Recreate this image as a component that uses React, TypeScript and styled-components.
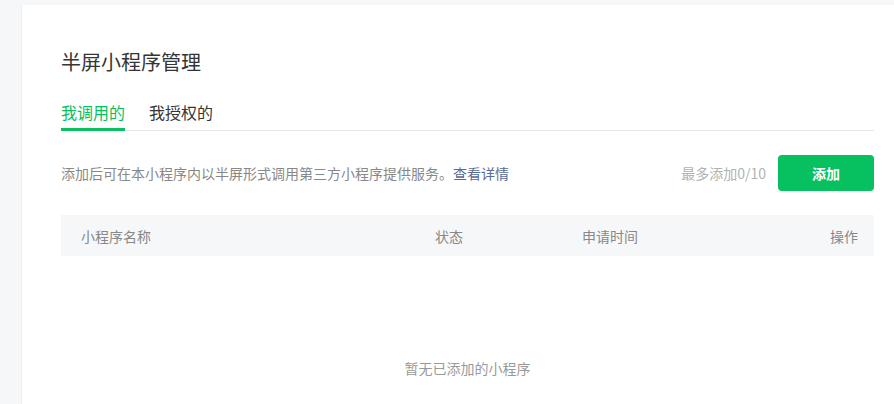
import React, { useState } from 'react';
import styled, { createGlobalStyle } from 'styled-components';

const GlobalStyle = createGlobalStyle`
  html, body {
    margin: 0;
    padding: 0;
    background-color: #f6f7f9;
    font-family: "Noto Sans CJK SC", "Noto Sans", sans-serif;
    overflow: hidden;
  }
`;

const Page = styled.div`
  height: 404px;
  padding: 5px 0 0 21px;
  box-sizing: border-box;
  overflow: hidden;
`;

const Card = styled.div`
  background-color: #ffffff;
  border-left: 1px solid #eceef1;
  height: 100%;
  width: 913px;
  padding: 43px 0 0 39px;
  box-sizing: border-box;
`;

const Content = styled.div`
  width: 813px;
`;

const Title = styled.h2`
  margin: 0;
  font-size: 20px;
  line-height: 28px;
  font-weight: 400;
  color: #353535;
`;

const TabBar = styled.div`
  display: flex;
  gap: 24px;
  margin-top: 24px;
  border-bottom: 1px solid #e5e5e5;
`;

const Tab = styled.button<{ $active: boolean }>`
  border: none;
  background: none;
  padding: 0 0 4px;
  margin: 0 0 -1px;
  font-family: inherit;
  font-size: 16px;
  line-height: 24px;
  cursor: pointer;
  color: ${p => (p.$active ? '#07c160' : '#353535')};
  border-bottom: 3px solid ${p => (p.$active ? '#07c160' : 'transparent')};
`;

const InfoRow = styled.div`
  display: flex;
  align-items: center;
  margin-top: 24px;
`;

const Desc = styled.p`
  flex: 1;
  margin: 0;
  font-size: 14px;
  line-height: 20px;
  color: #888888;
`;

const Link = styled.a`
  color: #576b95;
  text-decoration: none;
  cursor: pointer;
`;

const Limit = styled.span`
  font-size: 14px;
  color: #b2b2b2;
  margin-right: 12px;
`;

const AddButton = styled.button`
  width: 96px;
  height: 36px;
  border: none;
  border-radius: 4px;
  background-color: #07c160;
  color: #ffffff;
  font-family: inherit;
  font-size: 14px;
  font-weight: 700;
  cursor: pointer;
`;

const TableHead = styled.div`
  display: grid;
  grid-template-columns: 354px 147px 1fr auto;
  align-items: center;
  height: 41px;
  margin-top: 24px;
  padding: 0 16px 0 20px;
  background-color: #f6f7f9;
  font-size: 14px;
  color: #888888;
`;

const Empty = styled.div`
  padding-top: 102px;
  text-align: center;
  font-size: 14px;
  line-height: 20px;
  color: #9a9a9a;
`;

const tabs = ['我调用的', '我授权的'];

export default function App() {
  const [active, setActive] = useState(0);

  return (
    <>
      <GlobalStyle />
      <Page>
        <Card>
          <Content>
            <Title>半屏小程序管理</Title>
            <TabBar>
              {tabs.map((t, i) => (
                <Tab key={t} $active={i === active} onClick={() => setActive(i)}>
                  {t}
                </Tab>
              ))}
            </TabBar>
            <InfoRow>
              <Desc>
                添加后可在本小程序内以半屏形式调用第三方小程序提供服务。<Link>查看详情</Link>
              </Desc>
              <Limit>最多添加0/10</Limit>
              <AddButton>添加</AddButton>
            </InfoRow>
            <TableHead>
              <span>小程序名称</span>
              <span>状态</span>
              <span>申请时间</span>
              <span>操作</span>
            </TableHead>
            <Empty>暂无已添加的小程序</Empty>
          </Content>
        </Card>
      </Page>
    </>
  );
}
